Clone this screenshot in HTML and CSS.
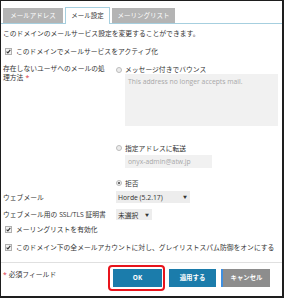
FILE: index.html
```html
<!DOCTYPE html>
<html lang="ja">
<head>
<meta charset="utf-8">
<title>メール設定</title>
<link rel="stylesheet" href="styles.css">
</head>
<body>
<div class="frame">
  <div class="tabs">
    <div class="tab tab-1">メールアドレス</div>
    <div class="tab tab-2 active">メール設定</div>
    <div class="tab tab-3">メーリングリスト</div>
  </div>
  <div class="content">
    <p class="intro">このドメインのメールサービス設定を変更することができます。</p>
    <div class="check check-first">
      <svg class="cb" width="7" height="7" viewBox="0 0 7 7"><rect x=".5" y=".5" width="6" height="6" fill="#f2f2f2" stroke="#b0b0b0"/><path d="M1.6 3.6l1.3 1.3 2.4-3" stroke="#333" fill="none" stroke-width="1.1"/></svg>
      <span>このドメインでメールサービスをアクティブ化</span>
    </div>
    <div class="row row-bounce">
      <div class="label label-two">
        <span class="label-line">存在しないユーザへのメールの処</span>
        <span class="label-line"><span>理方法</span><span class="req">*</span></span>
      </div>
      <div class="ctrl">
        <div class="radio-line"><span class="radio"></span><span>メッセージ付きでバウンス</span></div>
        <div class="textarea">This address no longer accepts mail.</div>
        <div class="radio-line radio-2"><span class="radio"></span><span>指定アドレスに転送</span></div>
        <div class="input">onyx-admin@atw.jp</div>
        <div class="radio-line radio-3"><span class="radio checked"></span><span>拒否</span></div>
      </div>
    </div>
    <div class="row row-webmail">
      <div class="label">ウェブメール</div>
      <div class="ctrl"><div class="select select-horde"><span>Horde (5.2.17)</span><span class="arrow">▼</span></div></div>
    </div>
    <div class="row row-ssl">
      <div class="label">ウェブメール用の SSL/TLS 証明書</div>
      <div class="ctrl"><div class="select select-ssl"><span>未選択</span><span class="arrow">▼</span></div></div>
    </div>
    <div class="check check-ml">
      <svg class="cb" width="7" height="7" viewBox="0 0 7 7"><rect x=".5" y=".5" width="6" height="6" fill="#f2f2f2" stroke="#b0b0b0"/><path d="M1.6 3.6l1.3 1.3 2.4-3" stroke="#333" fill="none" stroke-width="1.1"/></svg>
      <span>メーリングリストを有効化</span>
    </div>
    <div class="check check-grey">
      <svg class="cb" width="7" height="7" viewBox="0 0 7 7"><rect x=".5" y=".5" width="6" height="6" fill="#f2f2f2" stroke="#b0b0b0"/><path d="M1.6 3.6l1.3 1.3 2.4-3" stroke="#333" fill="none" stroke-width="1.1"/></svg>
      <span>このドメイン下の全メールアカウントに対し、グレイリストスパム防御をオンにする</span>
    </div>
    <div class="separator"></div>
    <div class="footer">
      <div class="required"><span class="req">*</span><span>必須フィールド</span></div>
      <div class="btn btn-ok">OK<span class="highlight"></span></div>
      <div class="btn btn-apply">適用する</div>
      <div class="btn btn-cancel">キャンセル</div>
    </div>
  </div>
</div>
</body>
</html>
```
FILE: styles.css
```css
* { box-sizing: border-box; margin: 0; padding: 0; }
html, body { background: #fff; }
body {
  margin: 0;
  font-family: "Open Sans", "Noto Sans CJK JP", sans-serif;
  font-size: 6.8px;
  color: #333;
}
.frame {
  width: 284px;
  height: 298px;
  border: solid #1e1e1e;
  border-width: 1px 2px 2px 1px;
  display: flex;
  flex-direction: column;
}
.tabs {
  display: flex;
  align-items: flex-end;
  gap: 2px;
  height: 23px;
  padding: 7px 0 0 2px;
  border-bottom: 1px solid #a6cfdf;
}
.tab {
  height: 15px;
  line-height: 15px;
  font-size: 6.5px;
  text-align: center;
  color: #fff;
  background: #b4b4b4;
}
.tab-1 { width: 60px; }
.tab-2 { width: 45px; }
.tab-3 { width: 63px; }
.tab.active {
  height: 17px;
  line-height: 16px;
  margin-bottom: -1px;
  background: #fff;
  color: #333;
  border: 1px solid #a6cfdf;
  border-bottom: none;
}
.content {
  padding: 0 0 0 2px;
  display: flex;
  flex-direction: column;
}
.intro { margin-top: 4.5px; line-height: 9px; }
.check {
  display: flex;
  align-items: center;
  line-height: 9px;
  padding-left: 2px;
}
.check .cb { margin-right: 4px; flex: none; }
.check-first { margin-top: 9px; }
.check-ml { margin-top: 5px; }
.check-grey { margin-top: 9px; }
.row {
  display: grid;
  grid-template-columns: 113px 1fr;
}
.label { line-height: 9px; }
.label-two { display: flex; flex-direction: column; }
.label-line { display: flex; gap: 2px; line-height: 8.5px; white-space: nowrap; }
.req { color: #d9303a; }
.required { display: flex; gap: 2px; }
.row-bounce { margin-top: 9.5px; }
.radio-line {
  display: flex;
  align-items: center;
  line-height: 9px;
}
.radio {
  width: 6px;
  height: 6px;
  border-radius: 50%;
  border: 1px solid #bcbcbc;
  background: #ececec;
  margin-right: 3px;
  position: relative;
  flex: none;
}
.radio.checked::after {
  content: "";
  position: absolute;
  left: 1px;
  top: 1px;
  width: 2px;
  height: 2px;
  border-radius: 50%;
  background: #444;
}
.textarea {
  margin-left: 9px;
  width: 153px;
  height: 52px;
  background: #f1f1f1;
  color: #a8a8a8;
  line-height: 9px;
  padding: 2.5px 3px;
}
.radio-2 { margin-top: 17.5px; }
.input {
  margin: 2.5px 0 0 9px;
  width: 87px;
  height: 13px;
  line-height: 13px;
  background: #f1f1f1;
  color: #a8a8a8;
  padding-left: 3px;
}
.radio-3 { margin-top: 10.5px; }
.row-webmail { margin-top: 3.5px; align-items: center; }
.row-ssl { margin-top: 6px; align-items: center; }
.select {
  display: flex;
  justify-content: space-between;
  align-items: center;
  background: #ededed;
  padding: 0 3px 0 2px;
  color: #333;
}
.select-horde { width: 74px; height: 12px; }
.select-ssl { width: 36px; height: 11px; }
.arrow { font-size: 4px; }
.separator {
  margin-top: 9.5px;
  border-top: 1px solid #e0e0e0;
  margin-left: -2px;
}
.footer {
  display: flex;
  align-items: flex-start;
  margin-top: 6px;
}
.required { width: 110px; line-height: 9px; margin-top: 1.5px; }
.btn {
  height: 18px;
  line-height: 18px;
  text-align: center;
  color: #fff;
  font-weight: bold;
  font-size: 6.4px;
  background: #1b7cab;
}
.btn-ok { width: 49px; position: relative; }
.btn-apply { width: 47px; margin-left: 7px; }
.btn-cancel {
  width: 49px;
  margin-left: 5px;
  background: #8d8d8d;
  border-left: 2px solid #3f8fe0;
}
.highlight {
  position: absolute;
  left: -5px;
  top: -4px;
  right: -3px;
  bottom: -4px;
  border: 2.5px solid #e8141c;
  border-radius: 4px;
}
```
